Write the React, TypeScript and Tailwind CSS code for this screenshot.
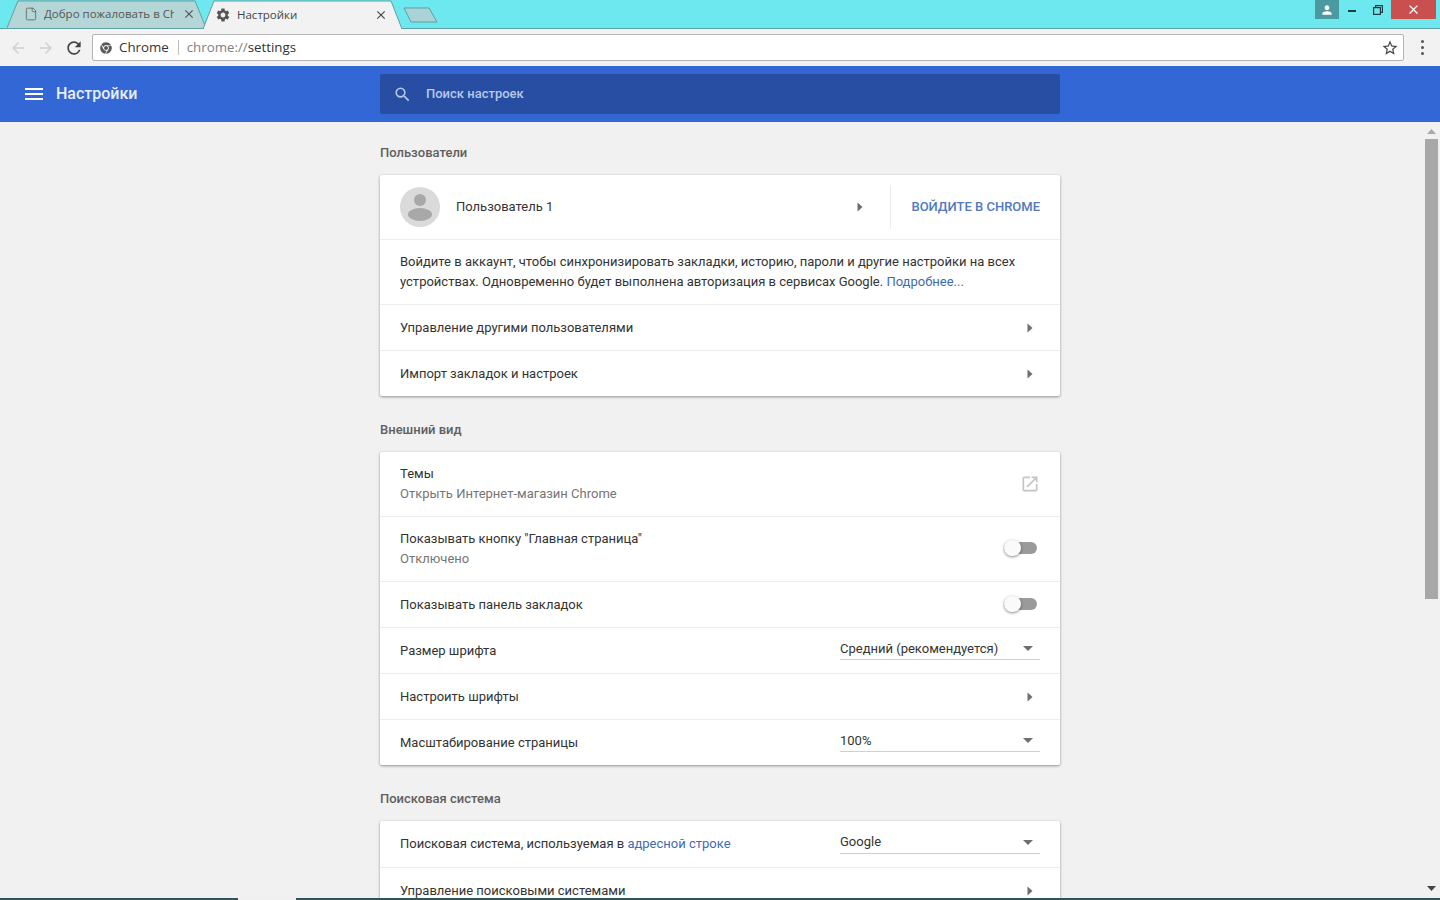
import { MdMenu, MdOpenInNew, MdRefresh, MdSearch, MdSettings, MdStarBorder, MdArrowBack, MdArrowForward, MdClose, MdPerson } from "react-icons/md";
import { FaChrome } from "react-icons/fa";
import { LuFile } from "react-icons/lu";

function Arrow() {
  return (
    <svg width="6" height="10" viewBox="0 0 6 10" className="shrink-0">
      <path d="M0.5 0.5 L5.5 5 L0.5 9.5 Z" fill="#6e6e6e" />
    </svg>
  );
}

function Caret() {
  return (
    <svg width="10" height="5" viewBox="0 0 10 5" className="shrink-0">
      <path d="M0 0 H10 L5 5 Z" fill="#6e6e6e" />
    </svg>
  );
}

function Toggle() {
  return (
    <div className="relative w-[33px] h-[12px] -mt-[2px] rounded-full bg-[#9a9a9a]">
      <div className="absolute left-0 top-[-2px] w-[17px] h-[16px] rounded-full bg-[#fafafa] shadow-[0_1px_3px_rgba(0,0,0,0.45)]"></div>
    </div>
  );
}

function Select({ value }: { value: string }) {
  return (
    <div className="w-[200px] h-[22px] flex items-center justify-between pl-0 pr-[7px] border-b border-[#d0d0d0] mb-[3px]">
      <span className="text-[#333]">{value}</span>
      <Caret />
    </div>
  );
}

function LinkRow({ label }: { label: string }) {
  return (
    <div className="h-[46px] flex items-center justify-between pl-5 pr-[27px] border-t border-[#ececec]">
      <span>{label}</span>
      <Arrow />
    </div>
  );
}

function SelectRow({ label, value }: { label: string; value: string }) {
  return (
    <div className="h-[46px] flex items-center justify-between pl-5 pr-5 border-t border-[#ececec]">
      <span>{label}</span>
      <Select value={value} />
    </div>
  );
}

function Card({ children }: { children: React.ReactNode }) {
  return (
    <div className="bg-white rounded-[2px] shadow-[0_1px_3px_rgba(0,0,0,0.4)]">{children}</div>
  );
}

function Heading({ children }: { children: React.ReactNode }) {
  return <h2 className="h-5 leading-5 mt-px mb-[12px] font-medium text-[#5f5f5f]">{children}</h2>;
}

function TabShape({ fill, stroke }: { fill: string; stroke: string }) {
  return (
    <svg className="absolute inset-0 w-full h-full" viewBox="0 0 200 29" preserveAspectRatio="none">
      <path d="M0 29 L11 1 H189 L200 29 Z" fill={fill} />
      <path d="M0 29 L11 1 H189 L200 29" fill="none" stroke={stroke} strokeWidth="1" />
    </svg>
  );
}

export default function App() {
  return (
    <div className="w-[1440px] h-[900px] overflow-hidden flex flex-col bg-[#f1f1f1] font-['Roboto',sans-serif] text-[13px] text-[#333]">
      {/* window frame */}
      <div className="relative h-[29px] shrink-0 bg-[#6ce8ee] border-b border-[#5f9ea2] flex items-end pl-[7px] font-['Open_Sans',sans-serif] text-[11.5px]">
        <div className="relative w-[199px] h-[28px] flex items-center pl-[17px] pr-[10px]">
          <TabShape fill="#b5d6d6" stroke="#6a9a9c" />
          <LuFile className="relative text-[#666] mr-[6px] shrink-0" size={14} strokeWidth={1.5} />
          <span className="relative text-[#555] whitespace-nowrap overflow-hidden w-[130px]">Добро пожаловать в Chrome</span>
          <MdClose className="relative ml-auto text-[#555]" size={14} />
        </div>
        <div className="relative w-[199px] h-[29px] -ml-[3px] -mb-px flex items-center pl-[12px] pr-[14px]">
          <TabShape fill="#f2f2f2" stroke="#5f9ea2" />
          <MdSettings className="relative text-[#555] mr-[6px]" size={16} />
          <span className="relative text-[#444]">Настройки</span>
          <MdClose className="relative ml-auto text-[#444]" size={14} />
        </div>
        <svg width="36" height="16" viewBox="0 0 36 16" className="mb-[5px] ml-px">
          <path d="M1 1 H26 L34 15 H8 Z" fill="#a9d3d6" stroke="#5f9ea2" strokeLinejoin="round" />
        </svg>
        <div className="absolute right-[4px] top-0 h-[19px] flex items-start">
          <div className="w-[24px] h-[19px] bg-[#4b9aa1] flex items-center justify-center text-white">
            <MdPerson size={14} />
          </div>
          <div className="w-[26px] h-[19px] flex items-center justify-center">
            <div className="w-[8px] h-[2px] bg-[#1d3c40] mt-[3px]"></div>
          </div>
          <div className="w-[26px] h-[19px] flex items-center justify-center">
            <svg width="10" height="10" viewBox="0 0 10 10" fill="none" stroke="#1d3c40" strokeWidth="1.2">
              <rect x="0.6" y="2.6" width="6.8" height="6.8" />
              <path d="M2.6 2.6 V0.6 H9.4 V7.4 H7.4" />
            </svg>
          </div>
          <div className="w-[45px] h-[19px] bg-[#c9504e] flex items-center justify-center text-white">
            <MdClose size={15} />
          </div>
        </div>
      </div>

      {/* toolbar */}
      <div className="h-[37px] shrink-0 bg-[#f2f2f2] flex items-center pl-[9px] pr-[16px] font-['Open_Sans',sans-serif]">
        <MdArrowBack className="text-[#d0d0d0]" size={18} />
        <MdArrowForward className="text-[#d0d0d0] ml-[10px]" size={18} />
        <MdRefresh className="text-[#444] ml-[9px]" size={20} />
        <div className="ml-[8px] flex-1 h-[27px] bg-white border border-[#b5b5b5] rounded-[2px] flex items-center pl-[7px] pr-[4px]">
          <FaChrome className="text-[#5a5a5a] mr-[7px]" size={12} />
          <span className="text-[13.3px] text-[#333]">Chrome</span>
          <div className="w-px h-[15px] bg-[#bdbdbd] ml-[9px] mr-[8px]"></div>
          <span className="text-[13.3px] text-[#808080]">chrome://</span>
          <span className="text-[13.3px] text-[#333]">settings</span>
          <MdStarBorder className="ml-auto text-[#444]" size={18} />
        </div>
        <div className="ml-[17px] w-[3px] flex flex-col gap-[3px]">
          <div className="w-[3px] h-[3px] rounded-full bg-[#555]"></div>
          <div className="w-[3px] h-[3px] rounded-full bg-[#555]"></div>
          <div className="w-[3px] h-[3px] rounded-full bg-[#555]"></div>
        </div>
      </div>

      {/* settings header */}
      <header className="h-[56px] shrink-0 bg-[#3367d6] flex items-center text-white">
        <div className="w-[380px] shrink-0 flex items-center pl-[22px]">
          <MdMenu size={24} />
          <span className="ml-[10px] text-[16px] font-medium text-[#e8eefb]">Настройки</span>
        </div>
        <div className="w-[680px] h-[40px] bg-[#274ea3] rounded-[2px] flex items-center pl-[13px]">
          <MdSearch className="text-[#b8c8ea]" size={19} />
          <span className="ml-[14px] font-medium text-[#b8c8ea]">Поиск настроек</span>
        </div>
      </header>

      {/* content */}
      <div className="flex-1 min-h-0 relative overflow-hidden">
        <div className="w-[680px] ml-[380px] pt-5">
          <Heading>Пользователи</Heading>
          <Card>
            <div className="h-[64px] flex items-center pl-5 pr-5">
              <div className="w-10 h-10 rounded-full bg-[#dadada] flex flex-col items-center justify-center">
                <div className="w-[12px] h-[12px] rounded-full bg-[#a8a8a8]"></div>
                <div className="w-[24px] h-[13px] rounded-[50%] bg-[#a8a8a8] mt-[2px]"></div>
              </div>
              <span className="ml-4">Пользователь 1</span>
              <div className="ml-auto mr-[27px]"><Arrow /></div>
              <div className="w-px h-[44px] bg-[#ececec]"></div>
              <span className="ml-5 font-medium text-[#5079bf]">ВОЙДИТЕ В CHROME</span>
            </div>
            <div className="h-[65px] border-t border-[#ececec] px-5 pt-[12px] leading-[20px]">
              Войдите в аккаунт, чтобы синхронизировать закладки, историю, пароли и другие настройки на всех
              <br />
              устройствах. Одновременно будет выполнена авторизация в сервисах Google.{" "}
              <span className="text-[#3f6bb3]">Подробнее...</span>
            </div>
            <LinkRow label="Управление другими пользователями" />
            <LinkRow label="Импорт закладок и настроек" />
          </Card>

          <div className="h-[23px]"></div>
          <Heading>Внешний вид</Heading>
          <Card>
            <div className="h-[64px] flex items-center justify-between pl-5 pr-[20px]">
              <div className="leading-[20px]">
                <div>Темы</div>
                <div className="text-[#757575]">Открыть Интернет-магазин Chrome</div>
              </div>
              <MdOpenInNew className="text-[#c4c4c4]" size={20} />
            </div>
            <div className="h-[65px] flex items-center justify-between pl-5 pr-[23px] border-t border-[#ececec]">
              <div className="leading-[20px]">
                <div>Показывать кнопку "Главная страница"</div>
                <div className="text-[#757575]">Отключено</div>
              </div>
              <Toggle />
            </div>
            <div className="h-[46px] flex items-center justify-between pl-5 pr-[23px] border-t border-[#ececec]">
              <span>Показывать панель закладок</span>
              <Toggle />
            </div>
            <SelectRow label="Размер шрифта" value="Средний (рекомендуется)" />
            <LinkRow label="Настроить шрифты" />
            <SelectRow label="Масштабирование страницы" value="100%" />
          </Card>

          <div className="h-[23px]"></div>
          <Heading>Поисковая система</Heading>
          <Card>
            <div className="h-[46px] flex items-center justify-between pl-5 pr-5">
              <span>
                Поисковая система, используемая в <span className="text-[#3f6bb3]">адресной строке</span>
              </span>
              <Select value="Google" />
            </div>
            <LinkRow label="Управление поисковыми системами" />
          </Card>
        </div>

        {/* scrollbar */}
        <div className="absolute right-[2px] top-0 bottom-0 w-[13px] flex flex-col items-center">
          <svg width="9" height="5" viewBox="0 0 9 5" className="mt-[7px]">
            <path d="M0 5 L4.5 0 L9 5 Z" fill="#a8a8a8" />
          </svg>
          <div className="w-[13px] h-[460px] bg-[#a8a8a8] mt-[5px]"></div>
          <svg width="9" height="5" viewBox="0 0 9 5" className="mt-auto mb-[7px]">
            <path d="M0 0 H9 L4.5 5 Z" fill="#444" />
          </svg>
        </div>
      </div>

      {/* taskbar edge */}
      <div className="h-[2px] shrink-0 bg-[#2f5558] pl-[238px]">
        <div className="w-[58px] h-[2px] bg-[#f0f0f0]"></div>
      </div>
    </div>
  );
}
